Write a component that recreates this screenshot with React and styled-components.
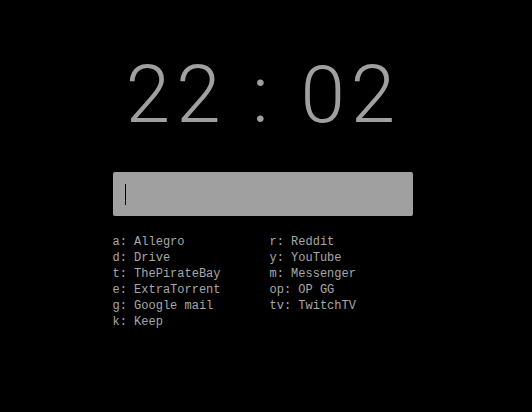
import React from 'react';
import styled, { createGlobalStyle } from 'styled-components';

const GlobalStyle = createGlobalStyle`
  html, body {
    margin: 0;
    background: #000;
    height: 100%;
  }
`;

const links = [
  ['a', 'Allegro'],
  ['r', 'Reddit'],
  ['d', 'Drive'],
  ['y', 'YouTube'],
  ['t', 'ThePirateBay'],
  ['m', 'Messenger'],
  ['e', 'ExtraTorrent'],
  ['op', 'OP GG'],
  ['g', 'Google mail'],
  ['tv', 'TwitchTV'],
  ['k', 'Keep'],
];

const App = () => {
  return (
    <Page>
      <GlobalStyle />
      <Wrapper>
        <Clock>22 : 02</Clock>
        <SearchBox>
          <Cursor />
        </SearchBox>
        <LinkGrid>
          {links.map(([key, name]) => (
            <LinkItem key={key}>{key}: {name}</LinkItem>
          ))}
        </LinkGrid>
      </Wrapper>
    </Page>
  );
};

export default App;

const Page = styled.div`
  min-height: 412px;
  background: #000;
  padding-top: 54px;
  padding-right: 7px;
  box-sizing: border-box;
  display: flex;
  justify-content: center;
`;

const Wrapper = styled.div`
  width: 300px;
  display: flex;
  flex-direction: column;
`;

const Clock = styled.div`
  font-family: Roboto, sans-serif;
  font-weight: 300;
  font-size: 80px;
  line-height: 82px;
  color: #a0a0a0;
  text-align: center;
  white-space: nowrap;
  letter-spacing: 6px;
  text-indent: 2px;
`;

const SearchBox = styled.div`
  margin-top: 36px;
  height: 44px;
  background: #a0a0a0;
  border-radius: 2px;
  display: flex;
  align-items: center;
  padding-left: 12px;
`;

const Cursor = styled.span`
  width: 1px;
  height: 21px;
  background: #000;
`;

const LinkGrid = styled.div`
  margin-top: 18px;
  display: grid;
  grid-template-columns: 157px 1fr;
`;

const LinkItem = styled.div`
  font-family: 'Liberation Mono', monospace;
  font-size: 12px;
  line-height: 16px;
  color: #a8a8a8;
  white-space: pre;
`;
